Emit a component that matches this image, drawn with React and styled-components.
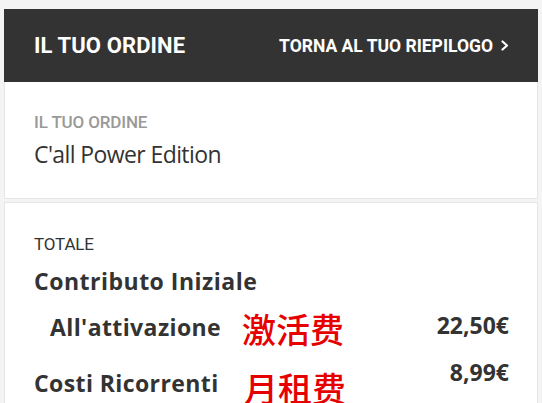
import React from 'react'
import styled, { createGlobalStyle } from 'styled-components'

const dark = '#333333'
const red = '#e60000'

const GlobalStyle = createGlobalStyle`
  body {
    margin: 0;
    background: #f4f4f4;
    font-family: Roboto, "Open Sans", sans-serif;
    color: ${dark};
  }
`

const Page = styled.div`
  padding: 9px 4px 0;
`

const Header = styled.div`
  height: 73px;
  background: ${dark};
  display: flex;
  align-items: center;
  justify-content: space-between;
  padding: 0 29px 0 30px;
`

const HeaderTitle = styled.div`
  color: #fff;
  font-size: 22px;
  font-weight: 700;
  letter-spacing: 0.1px;
`

const BackLink = styled.a`
  color: #fff;
  font-size: 17.5px;
  font-weight: 700;
  display: flex;
  align-items: center;
  gap: 8px;
  cursor: pointer;
`

const Chevron = () => (
  <svg width="8" height="11" viewBox="0 0 8 11" fill="none">
    <polyline points="1.5,1.5 6,5.5 1.5,9.5" stroke="#fff" strokeWidth="2.2" strokeLinecap="round" strokeLinejoin="round" />
  </svg>
)

const Card = styled.div`
  background: #fff;
  border: 1px solid #e6e6e6;
  border-top: ${props => props.first ? 'none' : '1px solid #e6e6e6'};
  margin-top: ${props => props.first ? '0' : '3px'};
  padding: ${props => props.first ? '30px 28px 0 29px' : '31px 28px 20px 29px'};
  height: ${props => props.first ? '86px' : 'auto'};
`

const Label = styled.div`
  font-size: 17px;
  line-height: 20px;
  font-weight: ${props => props.muted ? 500 : 400};
  color: ${props => props.muted ? '#999' : dark};
  letter-spacing: -0.15px;
`

const ProductName = styled.div`
  margin-top: 6px;
  font-size: 23px;
  font-family: "Open Sans", sans-serif;
  letter-spacing: -0.6px;
`

const SectionTitle = styled.div`
  margin-top: 12px;
  font-family: "Open Sans", sans-serif;
  font-size: 23px;
  line-height: 30px;
  font-weight: 700;
  letter-spacing: 0.5px;
`

const Row = styled.div`
  display: flex;
  align-items: flex-start;
  padding-left: ${props => props.indent ? '16px' : '0'};
  margin-top: ${props => props.gap}px;
`

const RowLabel = styled.div`
  font-family: "Open Sans", sans-serif;
  font-size: 23px;
  line-height: 30px;
  font-weight: 700;
  letter-spacing: 0.4px;
  width: ${props => props.indent ? '192px' : '210px'};
  flex-shrink: 0;
  white-space: nowrap;
`

const Note = styled.div`
  font-family: "Noto Sans CJK SC", sans-serif;
  font-size: 34px;
  line-height: 34px;
  font-weight: 500;
  color: ${red};
  margin-top: ${props => props.shift}px;
`

const Price = styled.div`
  margin-left: auto;
  margin-top: ${props => props.shift}px;
  font-family: "Open Sans", sans-serif;
  font-size: 23px;
  line-height: 30px;
  font-weight: 700;
`

export default function App() {
  return (
    <Page>
      <GlobalStyle />
      <Header>
        <HeaderTitle>IL TUO ORDINE</HeaderTitle>
        <BackLink>
          TORNA AL TUO RIEPILOGO
          <Chevron />
        </BackLink>
      </Header>
      <Card first>
        <Label muted>IL TUO ORDINE</Label>
        <ProductName>C'all Power Edition</ProductName>
      </Card>
      <Card>
        <Label>TOTALE</Label>
        <SectionTitle>Contributo Iniziale</SectionTitle>
        <Row indent gap={16}>
          <RowLabel indent>All'attivazione</RowLabel>
          <Note shift={0}>激活费</Note>
          <Price shift={-2}>22,50€</Price>
        </Row>
        <Row gap={22}>
          <RowLabel>Costi Ricorrenti</RowLabel>
          <Note shift={3}>月租费</Note>
          <Price shift={-11}>8,99€</Price>
        </Row>
      </Card>
    </Page>
  )
}
